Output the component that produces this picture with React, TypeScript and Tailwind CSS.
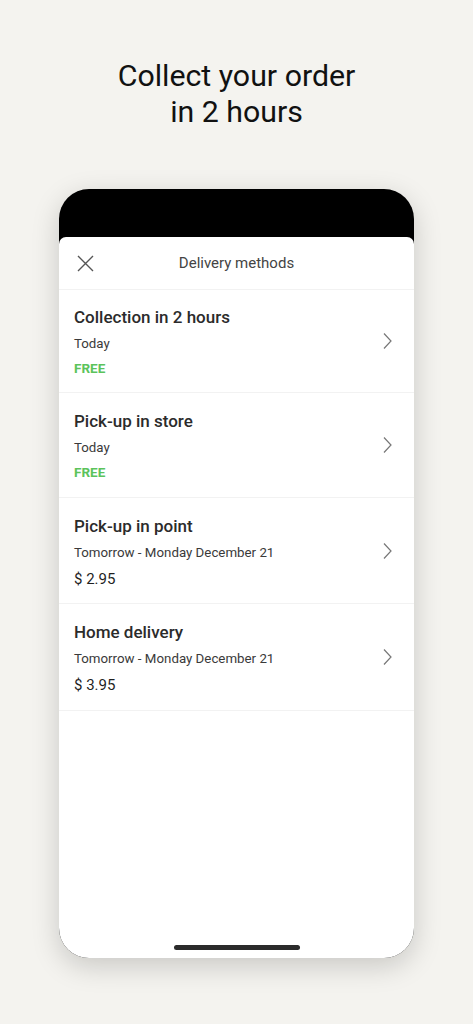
import React from "react";

const items = [
  { title: "Collection in 2 hours", sub: "Today", price: "FREE", free: true, h: "h-[103px] pt-[16px]" },
  { title: "Pick-up in store", sub: "Today", price: "FREE", free: true, h: "h-[105px] pt-[17px]" },
  { title: "Pick-up in point", sub: "Tomorrow - Monday December 21", price: "$ 2.95", free: false, h: "h-[106px] pt-[17px]" },
  { title: "Home delivery", sub: "Tomorrow - Monday December 21", price: "$ 3.95", free: false, h: "h-[107px] pt-[17px]" },
];

export default function App() {
  return (
    <div
      className="min-h-screen bg-[#f4f3ef] flex flex-col items-center"
      style={{ fontFamily: "Roboto, 'Noto Sans', sans-serif" }}
    >
      <h1 className="pt-[58px] text-[30.3px] leading-[36px] text-[#111] text-center font-normal">
        Collect your order
        <br />
        in 2 hours
      </h1>
      <div className="mt-[59px] w-[355px] h-[769px] rounded-[30px] bg-black overflow-hidden flex flex-col shadow-[0_8px_28px_rgba(0,0,0,0.18)]">
        <div className="h-[48px] shrink-0" />
        <div className="flex-1 bg-white rounded-t-[7px] flex flex-col">
          <div className="relative h-[53px] shrink-0 flex items-center justify-center border-b border-[#f2f2f2]">
            <svg
              className="absolute left-[18px] top-[18px]"
              width="17"
              height="17"
              viewBox="0 0 17 17"
              fill="none"
              stroke="#555"
              strokeWidth="1.4"
            >
              <path d="M1 1L16 16M16 1L1 16" />
            </svg>
            <span className="text-[15px] text-[#444]">Delivery methods</span>
          </div>
          {items.map((it) => (
            <div
              key={it.title}
              className={`relative shrink-0 pl-[15px] pr-[22px] border-b border-[#f2f2f2] ${it.h}`}
            >
              <div className="flex flex-col">
                <div className="text-[17px] leading-[22px] text-[#2b2b2b] font-medium">{it.title}</div>
                <div className="mt-[6px] text-[13.3px] leading-[20px] text-[#3a3a3a]">{it.sub}</div>
                {it.free ? (
                  <div className="mt-[4px] text-[13.5px] leading-[20px] font-bold text-[#5bc35b]">
                    {it.price}
                  </div>
                ) : (
                  <div className="mt-[5px] text-[15px] leading-[22px] text-[#1f1f1f]">{it.price}</div>
                )}
              </div>
              <svg
                className="absolute right-[22px] top-1/2 -translate-y-1/2"
                width="9"
                height="17"
                viewBox="0 0 9 17"
                fill="none"
                stroke="#777"
                strokeWidth="1.2"
              >
                <path d="M1 1L8 8.5L1 16" />
              </svg>
            </div>
          ))}
          <div className="flex-1" />
          <div className="flex justify-center pb-[8px]">
            <div className="w-[126px] h-[5px] rounded-full bg-[#2b2b2b]" />
          </div>
        </div>
      </div>
    </div>
  );
}
